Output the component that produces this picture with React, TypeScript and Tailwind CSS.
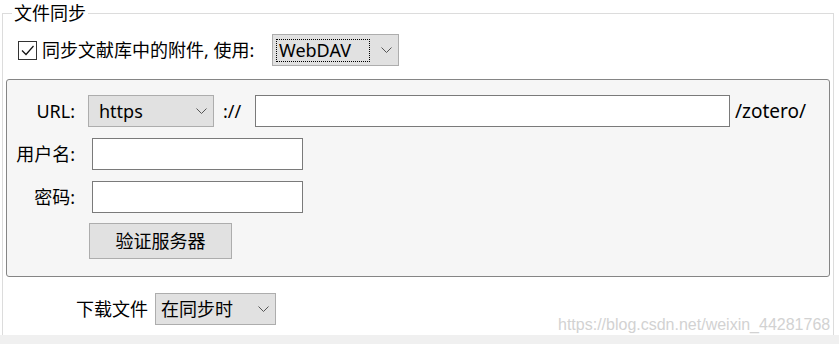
import React from "react";

const Chevron = ({ className = "" }: { className?: string }) => (
  <svg width="11" height="6" viewBox="0 0 11 6" className={className}>
    <path d="M0.5 0.5 L5.5 5.5 L10.5 0.5" fill="none" stroke="#555" strokeWidth="1" />
  </svg>
);

const Field = ({ w }: { w: string }) => (
  <div className={`h-[32px] border border-[#7a7a7a] bg-white ${w}`} />
);

export default function App() {
  return (
    <div className="w-[839px] h-[344px] bg-white text-black font-['Noto_Sans','Noto_Sans_CJK_SC',sans-serif] relative overflow-hidden">
      <fieldset className="mt-[3px] ml-[2px] w-[832px] h-[332px] border border-b-0 border-[#dcdcdc]">
        <legend className="ml-[9px] px-[2px] text-[18px] leading-[20px]">文件同步</legend>

        <div className="mt-[11px] pl-[15px] flex items-center h-[32px]">
          <div className="w-[19px] h-[19px] border border-[#333] bg-white flex items-center justify-center">
            <svg width="15" height="15" viewBox="0 0 15 15">
              <path d="M2 7.5 L6 11.5 L13.5 3" fill="none" stroke="#111" strokeWidth="1.2" />
            </svg>
          </div>
          <span className="ml-[5px] w-[230px] text-[18px] leading-none">同步文献库中的附件, 使用:</span>
          <div className="w-[127px] h-[32px] border border-[#adadad] bg-[#e1e1e1] flex items-center pl-[3px] pr-[6px]">
            <div className="w-[94px] h-[23px] border border-dotted border-black flex items-center pl-[2px] text-[18px] leading-none">
              WebDAV
            </div>
            <Chevron className="ml-auto" />
          </div>
        </div>

        <div className="ml-[3px] mt-[13px] w-[824px] h-[198px] border border-[#858585] rounded-[3px] bg-[#f6f6f6] pt-[15px]">
          <div className="flex items-center h-[32px]">
            <span className="w-[68px] text-right text-[18px] leading-none">URL:</span>
            <div className="ml-[13px] w-[126px] h-[32px] border border-[#adadad] bg-[#e1e1e1] flex items-center pl-[10px] pr-[6px]">
              <span className="text-[18px] leading-none">https</span>
              <Chevron className="ml-auto" />
            </div>
            <span className="ml-[9px] w-[32px] text-[18px] leading-none">://</span>
            <Field w="w-[475px]" />
            <span className="ml-[5px] text-[19px] leading-none">/zotero/</span>
          </div>

          <div className="mt-[11px] flex items-center">
            <span className="w-[68px] text-right text-[18px] leading-none">用户名:</span>
            <div className="ml-[17px]">
              <Field w="w-[211px]" />
            </div>
          </div>

          <div className="mt-[11px] flex items-center">
            <span className="w-[68px] text-right text-[18px] leading-none">密码:</span>
            <div className="ml-[17px]">
              <Field w="w-[211px]" />
            </div>
          </div>

          <button className="ml-[82px] mt-[10px] w-[143px] h-[36px] border border-[#adadad] bg-[#e1e1e1] text-[18px] leading-none">
            验证服务器
          </button>
        </div>

        <div className="mt-[16px] pl-[73px] flex items-center h-[32px]">
          <span className="w-[79px] text-[18px] leading-none">下载文件</span>
          <div className="w-[121px] h-[32px] border border-[#adadad] bg-[#e1e1e1] flex items-center pl-[5px] pr-[6px]">
            <span className="text-[18px] leading-none">在同步时</span>
            <Chevron className="ml-auto" />
          </div>
        </div>
      </fieldset>

      <div className="h-[9px] bg-[#f0f0f0]" />

      <div className="absolute left-[558px] top-[315px] text-[16px] leading-[20px] text-[#d2d2d2] font-['Liberation_Sans',sans-serif]">
        https://blog.csdn.net/weixin_44281768
      </div>
    </div>
  );
}
